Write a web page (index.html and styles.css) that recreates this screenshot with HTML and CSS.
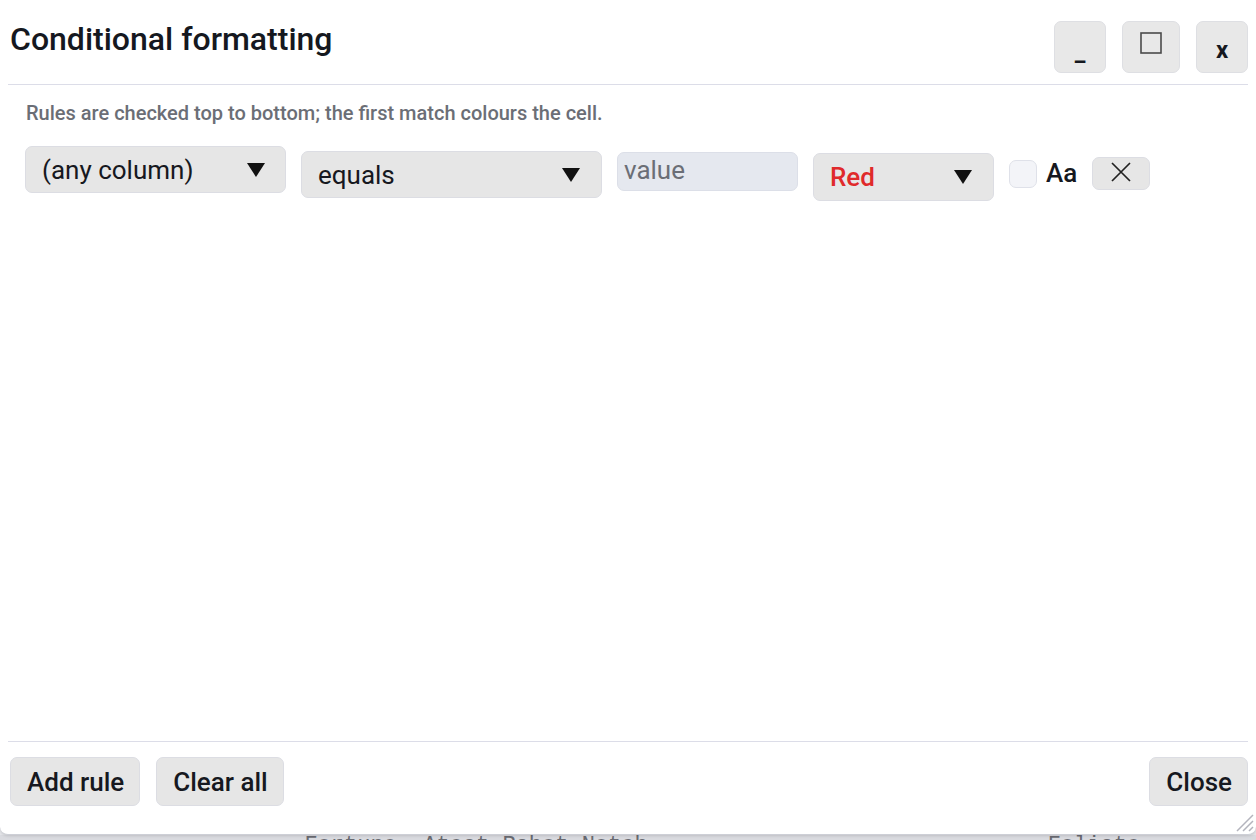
FILE: index.html
```html
<!DOCTYPE html>
<html>
<head>
<title>Conditional formatting</title>
<meta charset="UTF-8">
<link rel="stylesheet" href="styles.css">
</head>
<body>
  <!-- planilha por baixo do diálogo -->
  <div class="sheet">
    <div class="sheet-row">
      <span class="cell-mark">_</span>
      <span class="cell-mark second">_</span>
      <span class="cell-text">Fortune, Atest Rabot Notch</span>
      <span class="cell-text last">Foliate</span>
    </div>
  </div>

  <div class="dialog" id="cfDialog">
    <div class="dialog-header">
      <h1>Conditional formatting</h1>
      <div class="window-buttons">
        <button class="win-btn min">_</button>
        <button class="win-btn max">
          <svg width="22" height="22" viewBox="0 0 22 22"><rect x="1" y="1" width="20" height="20" fill="none" stroke="#4a4a4a" stroke-width="1.6"/></svg>
        </button>
        <button class="win-btn close">x</button>
      </div>
    </div>

    <div class="dialog-body">
      <p class="hint">Rules are checked top to bottom; the first match colours the cell.</p>

      <div class="rule-row">
        <div class="select column-select">
          <span>(any column)</span>
          <svg class="caret" width="18" height="14" viewBox="0 0 18 14"><polygon points="0,0 18,0 9,14" fill="#111"/></svg>
        </div>
        <div class="select op-select">
          <span>equals</span>
          <svg class="caret" width="18" height="14" viewBox="0 0 18 14"><polygon points="0,0 18,0 9,14" fill="#111"/></svg>
        </div>
        <input class="value-input" type="text" placeholder="value">
        <div class="select colour-select">
          <span class="red-text">Red</span>
          <svg class="caret" width="18" height="14" viewBox="0 0 18 14"><polygon points="0,0 18,0 9,14" fill="#111"/></svg>
        </div>
        <span class="case-box"></span>
        <span class="case-label">Aa</span>
        <button class="remove-btn">
          <svg width="20" height="20" viewBox="0 0 20 20"><path d="M1 1 L19 19 M19 1 L1 19" stroke="#222" stroke-width="1.7" fill="none"/></svg>
        </button>
      </div>
    </div>

    <div class="dialog-footer">
      <div class="footer-left">
        <button class="footer-btn">Add rule</button>
        <button class="footer-btn">Clear all</button>
      </div>
      <button class="footer-btn">Close</button>
    </div>

    <svg class="grip" width="22" height="22" viewBox="0 0 22 22">
      <path d="M21 5 L5 21 M21 11 L11 21 M21 17 L17 21" stroke="#b3b4bd" stroke-width="1.5" fill="none"/>
    </svg>
  </div>
</body>
</html>
```

FILE: styles.css
```css
body {
  margin: 0;
  width: 1256px;
  height: 840px;
  overflow: hidden;
  position: relative;
  background-color: #e4e5e9;
  font-family: Roboto, "Noto Sans", sans-serif;
  color: #161820;
}

/* Planilha de fundo, quase toda escondida */
.sheet {
  padding-top: 835px;
}
.sheet-row {
  height: 30px;
  box-sizing: border-box;
  padding-top: 4px;
  background-color: #d9dadf;
  display: flex;
  align-items: flex-start;
  font-family: "Liberation Mono", monospace;
  font-size: 22px;
  line-height: 14px;
  color: #6a6b72;
  white-space: nowrap;
}
.cell-mark {
  color: #5a55d8;
  margin-left: 38px;
  line-height: 0;
}
.cell-mark.second {
  margin-left: 216px;
}
.cell-text {
  margin-left: 24px;
}
.cell-text.last {
  margin-left: 400px;
}

/* Diálogo */
.dialog {
  position: absolute;
  left: 0;
  top: 0;
  width: 1256px;
  height: 835px;
  box-sizing: border-box;
  padding: 0 8px;
  background-color: #fff;
  border-bottom: 1px solid #cdcfd6;
  border-radius: 0 0 8px 8px;
  box-shadow: 0 1px 3px rgba(0,0,0,0.12);
  display: flex;
  flex-direction: column;
}
.dialog-header {
  height: 85px;
  box-sizing: border-box;
  border-bottom: 1px solid #dcdde8;
  display: flex;
  justify-content: space-between;
  align-items: flex-start;
  padding-left: 2px;
}
.dialog-header h1 {
  margin: 20px 0 0;
  font-size: 32px;
  line-height: 38px;
  font-weight: 500;
  color: #151820;
}
.window-buttons {
  display: flex;
  gap: 16px;
  margin-top: 21px;
}
.win-btn {
  width: 52px;
  height: 52px;
  box-sizing: border-box;
  border: 1px solid #dedfe3;
  border-radius: 7px;
  background-color: #e8e8e8;
  font-family: Roboto, sans-serif;
  font-size: 24px;
  font-weight: 700;
  color: #151820;
  padding: 0;
  cursor: pointer;
}
.win-btn.min {
  padding-top: 10px;
}
.win-btn.max {
  width: 58px;
  display: flex;
  justify-content: center;
  align-items: flex-start;
  padding-top: 10px;
}
.win-btn.close {
  padding-top: 6px;
}

.dialog-body {
  flex: 1;
  padding: 16px 18px 0;
}
.hint {
  margin: 0;
  font-size: 20px;
  line-height: 24px;
  font-weight: 500;
  color: #6b6e76;
}
.rule-row {
  display: flex;
  align-items: flex-start;
  gap: 15px;
  margin-top: 21px;
  margin-left: -1px;
}
.select {
  box-sizing: border-box;
  height: 47px;
  display: flex;
  align-items: center;
  justify-content: space-between;
  background-color: #e6e6e6;
  border: 1px solid #dcdde3;
  border-radius: 7px;
  padding: 0 20px 0 16px;
  font-size: 26px;
  color: #161820;
}
.column-select {
  width: 261px;
}
.op-select {
  width: 301px;
  margin-top: 5px;
  padding-right: 21px;
}
.colour-select {
  width: 181px;
  height: 48px;
  margin-top: 7px;
  padding-right: 21px;
}
.red-text {
  color: #e02a2b;
  font-weight: 500;
}
.value-input {
  width: 181px;
  height: 39px;
  box-sizing: border-box;
  margin-top: 6px;
  border: 1px solid #dcdfe8;
  border-radius: 7px;
  background-color: #e5e8ef;
  padding: 0 0 4px 6px;
  font-family: Roboto, sans-serif;
  font-size: 26px;
  outline: none;
}
.value-input::placeholder {
  color: #6b6e76;
}
.case-box {
  width: 28px;
  height: 28px;
  box-sizing: border-box;
  margin-top: 14px;
  border: 1px solid #dfe1e9;
  border-radius: 7px;
  background-color: #f3f4f8;
}
.case-label {
  margin: 11px 0 0 -6px;
  font-size: 26px;
  line-height: 32px;
  font-weight: 500;
}
.remove-btn {
  width: 58px;
  height: 33px;
  margin-top: 11px;
  border: 1px solid #dcdde3;
  border-radius: 7px;
  background-color: #e6e6e6;
  display: flex;
  justify-content: center;
  align-items: flex-start;
  padding: 4px 0 0;
  cursor: pointer;
}

.dialog-footer {
  border-top: 1px solid #dcdde8;
  padding: 15px 0 28px 2px;
  display: flex;
  justify-content: space-between;
  align-items: flex-start;
}
.footer-left {
  display: flex;
  gap: 16px;
}
.footer-btn {
  height: 49px;
  box-sizing: border-box;
  padding: 0 15px 0 16px;
  border: 1px solid #dcdde3;
  border-radius: 7px;
  background-color: #e6e6e6;
  font-family: Roboto, sans-serif;
  font-size: 26px;
  font-weight: 500;
  color: #161820;
  cursor: pointer;
}

.grip {
  position: absolute;
  right: 2px;
  bottom: 2px;
}
```
